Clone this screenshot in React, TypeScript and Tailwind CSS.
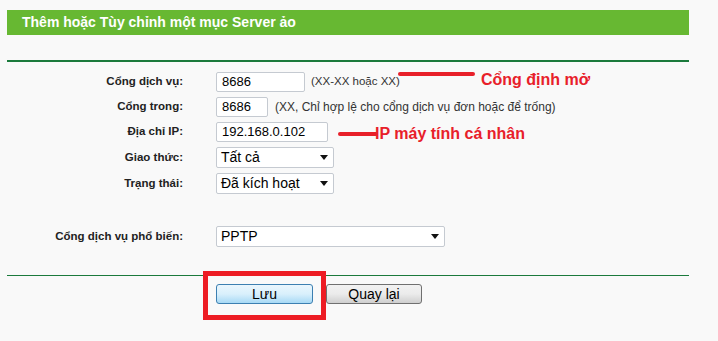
const font = { fontFamily: '"Liberation Sans", Arial, sans-serif' };

const Arrow = () => (
  <svg width="8" height="5" viewBox="0 0 8 5" className="shrink-0">
    <path d="M0 0h8L4 5z" fill="#111" />
  </svg>
);

const Label = ({ children }: { children: React.ReactNode }) => (
  <div className="w-[176px] shrink-0 text-right text-[11.5px] font-bold text-[#222]">{children}</div>
);

const Input = ({ value, width }: { value: string; width: string }) => (
  <div
    className={`${width} ml-[33px] h-[20px] shrink-0 rounded-[2px] border border-[#c5cad1] bg-white pl-[5px] text-[13px] leading-[18px] text-black`}
  >
    {value}
  </div>
);

const Select = ({ value, width }: { value: string; width: string }) => (
  <div
    className={`${width} ml-[33px] flex h-[21px] shrink-0 items-center justify-between rounded-[2px] border border-[#c5cad1] bg-white pl-[4px] pr-[5px] text-[14px] text-black`}
  >
    <span>{value}</span>
    <Arrow />
  </div>
);

export default function App() {
  return (
    <div className="relative h-[341px] w-[718px] overflow-hidden bg-[#f9f9f9] pl-[7px] pr-[29px] pt-[10px]" style={font}>
      <div className="flex h-[25px] items-center bg-[#67b832] pl-[15px] text-[14px] font-bold text-white">
        Thêm hoặc Tùy chỉnh một mục Server ảo
      </div>
      <div className="mt-[25px] h-[2px] bg-[#1b7a3c]" />

      <div className="mt-[10px] flex flex-col gap-[5px]">
        <div className="flex items-center">
          <Label>Cổng dịch vụ:</Label>
          <Input value="8686" width="w-[89px]" />
          <span className="ml-[6px] text-[11.5px] text-[#333]">(XX-XX hoặc XX)</span>
        </div>
        <div className="flex items-center">
          <Label>Cổng trong:</Label>
          <Input value="8686" width="w-[52px]" />
          <span className="ml-[7px] text-[12px] text-[#333]">
            (XX, Chỉ hợp lệ cho cổng dịch vụ đơn hoặc để trống)
          </span>
        </div>
        <div className="flex items-center">
          <Label>Địa chỉ IP:</Label>
          <Input value="192.168.0.102" width="w-[112px]" />
        </div>
        <div className="flex items-center">
          <Label>Giao thức:</Label>
          <Select value="Tất cả" width="w-[118px]" />
        </div>
        <div className="flex items-center">
          <Label>Trạng thái:</Label>
          <Select value="Đã kích hoạt" width="w-[118px]" />
        </div>
      </div>

      <div className="mt-[32px] flex items-center">
        <Label>Cổng dịch vụ phổ biến:</Label>
        <Select value="PPTP" width="w-[229px]" />
      </div>

      <div className="mt-[28px] h-px bg-[#1b7a3c]" />

      <div className="mt-[8px] flex pl-[209px] gap-[13px] text-[14px]">
        <button className="h-[20px] w-[97px] rounded-[3px] border border-[#3c7fb1] bg-gradient-to-b from-[#eaf6fd] via-[#d9f0fc] to-[#a7d9f5] leading-[18px] text-black">
          Lưu
        </button>
        <button className="h-[20px] w-[96px] rounded-[3px] border border-[#707070] bg-gradient-to-b from-[#f2f2f2] via-[#ebebeb] to-[#cfcfcf] leading-[18px] text-black">
          Quay lại
        </button>
      </div>

      {/* annotations */}
      <div className="absolute left-[398px] top-[72px] h-[4px] w-[77px] rounded-full bg-[#e8202a]" />
      <div className="absolute left-[481px] top-[70px] text-[16px] font-bold leading-[20px] text-[#e8202a]">
        Cổng định mở
      </div>
      <div className="absolute left-[338px] top-[132px] h-[4px] w-[40px] rounded-full bg-[#e8202a]" />
      <div className="absolute left-[375px] top-[124px] text-[16px] font-bold leading-[20px] text-[#e8202a]">
        IP máy tính cá nhân
      </div>
      <div className="absolute left-[203px] top-[271px] h-[49px] w-[123px] border-[5px] border-[#ed1c24]" />
    </div>
  );
}
